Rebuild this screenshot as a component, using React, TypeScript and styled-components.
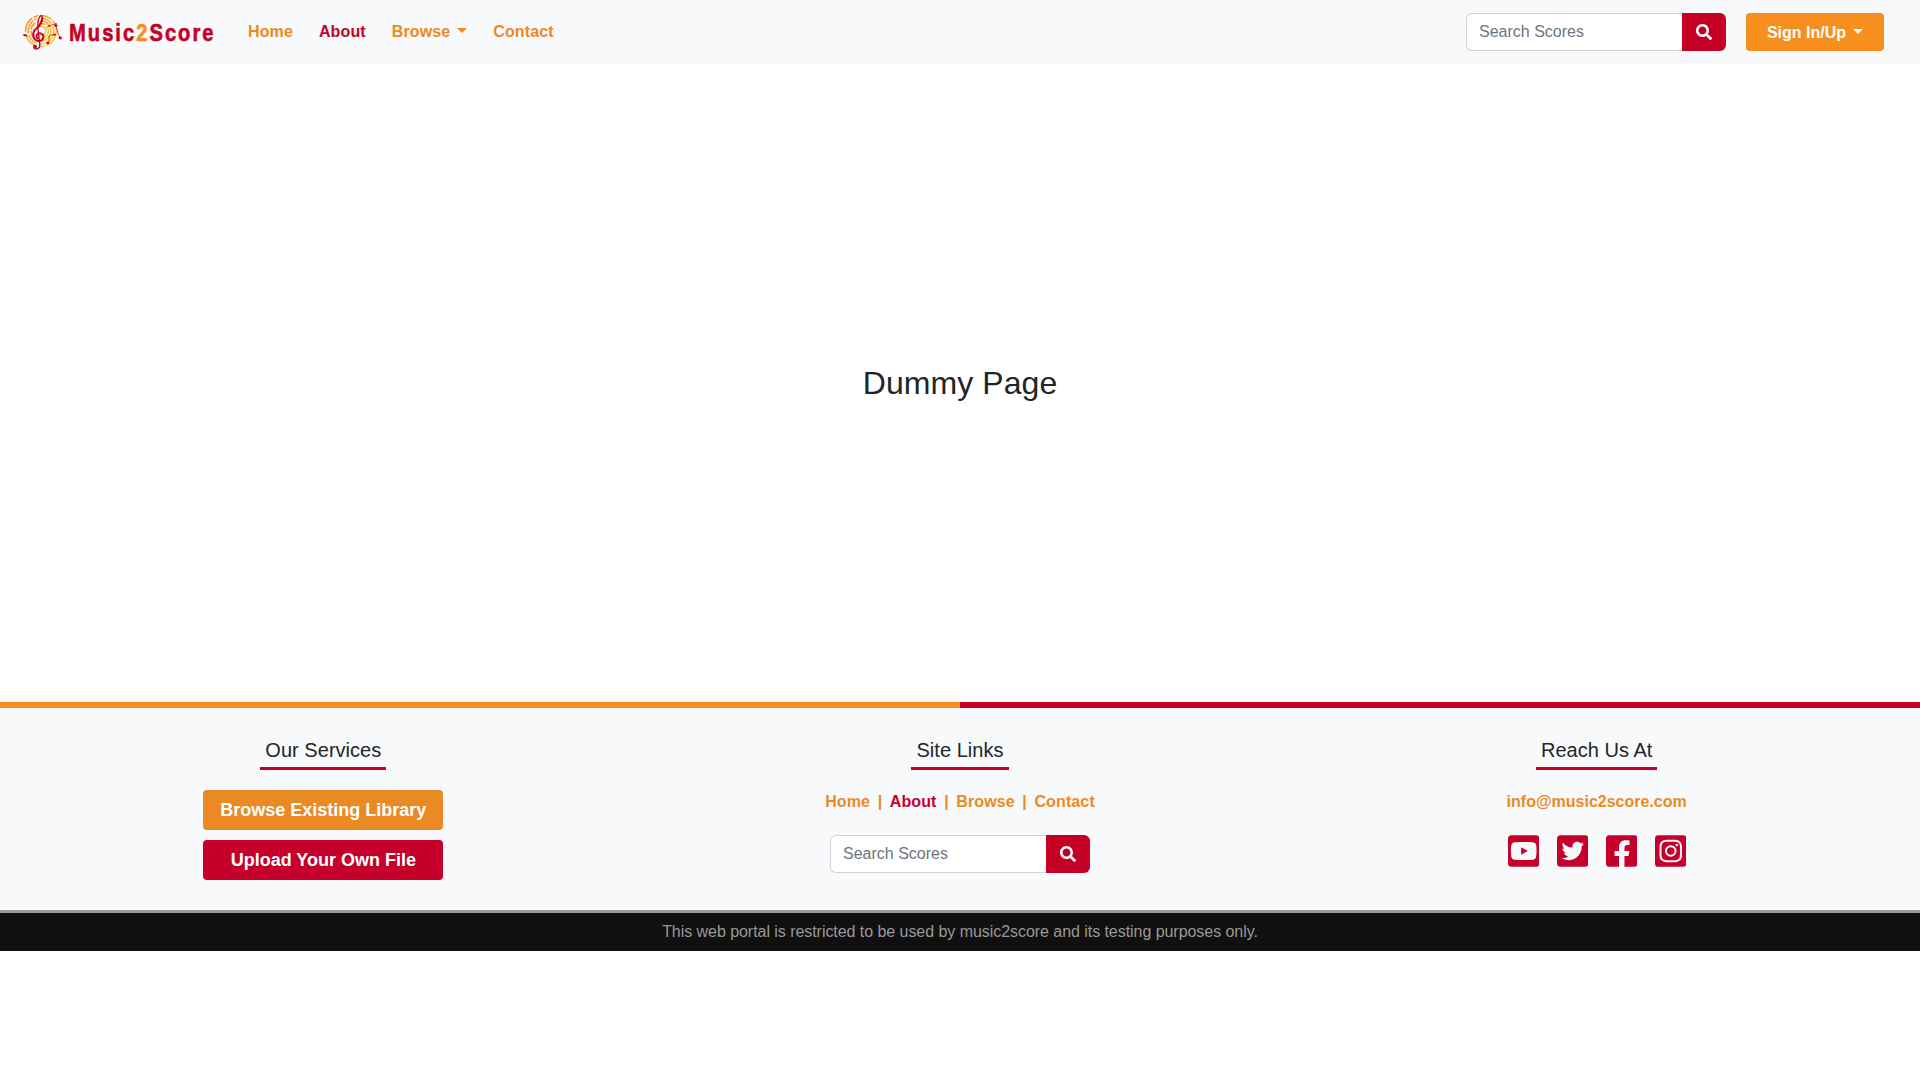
import React from "react";
import styled, { createGlobalStyle } from "styled-components";
import {
  FaSearch,
  FaYoutubeSquare,
  FaTwitterSquare,
  FaFacebookSquare,
  FaInstagramSquare,
} from "react-icons/fa";

const red = "#c4002b";
const searchRed = "#c50025";
const orange = "#eb8a25";
const brightOrange = "#f78f1e";

const GlobalStyle = createGlobalStyle`
  *, *::before, *::after { box-sizing: border-box; }
  body {
    margin: 0;
    background: #fff;
    color: #212529;
    font-family: "Liberation Sans", Arial, sans-serif;
    font-size: 16px;
    line-height: 24px;
  }
`;

const Navbar = styled.nav`
  display: flex;
  align-items: center;
  height: 64px;
  padding: 0 36px 0 22px;
  background: #f8f9fb;
`;

const Logo = styled.svg`
  display: block;
  flex: none;
  width: 196px;
  height: 64px;
`;

const NavLinks = styled.div`
  display: flex;
  gap: 26px;
  margin-left: 30px;
  flex: 1;
`;

const Link = styled.a<{ $active?: boolean }>`
  color: ${(p) => (p.$active ? red : orange)};
  font-weight: 700;
  letter-spacing: 0.12px;
  text-decoration: none;
  white-space: nowrap;
`;

const Email = styled(Link)`
  letter-spacing: 0;
`;

const Caret = styled.span`
  display: inline-block;
  margin-left: 7px;
  vertical-align: 4px;
  border-top: 5px solid;
  border-left: 5px solid transparent;
  border-right: 5px solid transparent;
`;

const SearchForm = styled.form`
  display: flex;
  width: 260px;
  height: 38px;
`;

const SearchInput = styled.input`
  flex: 1;
  min-width: 0;
  padding: 6px 12px;
  border: 1px solid #ced4da;
  border-right: 0;
  border-radius: 6px 0 0 6px;
  background: #fff;
  font: inherit;
  &::placeholder { color: #6c757d; opacity: 1; }
`;

const SearchButton = styled.button`
  display: flex;
  align-items: center;
  justify-content: center;
  width: 44px;
  padding: 0;
  border: 0;
  border-radius: 0 6px 6px 0;
  background: ${searchRed};
  color: #fff;
  font-size: 16px;
`;

const SignButton = styled.button`
  width: 138px;
  height: 38px;
  margin-left: 20px;
  padding: 2px 0 0;
  border: 0;
  border-radius: 4px;
  background: ${brightOrange};
  color: #fff;
  font: inherit;
  font-weight: 700;
`;

const Main = styled.main`
  display: flex;
  align-items: center;
  justify-content: center;
  height: 638px;
`;

const Title = styled.h1`
  margin: 0;
  font-size: 32px;
  line-height: 38px;
  font-weight: 400;
  letter-spacing: 0.07px;
`;

const Stripe = styled.div`
  height: 6px;
  background: linear-gradient(to right, ${brightOrange} 50%, ${searchRed} 50%);
`;

const Footer = styled.footer`
  display: grid;
  grid-template-columns: repeat(3, 1fr);
  height: 202px;
  padding: 27px 5px 0;
  background: #f8f9fb;
`;

const Column = styled.section`
  display: flex;
  flex-direction: column;
  align-items: center;
`;

const ColumnTitle = styled.h2`
  height: 35px;
  margin: 0 0 20px;
  padding: 3px 5px 0;
  border-bottom: 3px solid ${red};
  font-size: 20px;
  line-height: 24px;
  font-weight: 400;
  letter-spacing: 0.03px;
`;

const ActionButton = styled.button<{ $color: string }>`
  width: 240px;
  height: 40px;
  margin-bottom: 10px;
  padding: 0;
  border: 0;
  border-radius: 4px;
  background: ${(p) => p.$color};
  color: #fff;
  font: inherit;
  font-size: 18px;
  font-weight: 700;
`;

const LinkRow = styled.div`
  display: flex;
  gap: 7.6px;
  margin-bottom: 21px;
  color: ${orange};
  font-weight: 700;
`;

const SocialRow = styled.div`
  display: flex;
  gap: 17.5px;
  padding-left: 1px;
  color: ${red};
  font-size: 36px;
  svg { display: block; width: 31.5px; height: 36px; margin-top: -2px; }
`;

const Notice = styled.div`
  height: 41px;
  padding-top: 7px;
  border-top: 3px solid #999b98;
  background: #101010;
  color: #999;
  letter-spacing: -0.05px;
  text-align: center;
`;

const LogoMark = () => (
  <Logo viewBox="22 0 196 64" role="img" aria-label="Music2Score">
    <defs>
      <linearGradient id="rings" x1="0" y1="0" x2="1" y2="1">
        <stop offset="0" stopColor="#f58a1f" />
        <stop offset="1" stopColor="#ffd93b" />
      </linearGradient>
    </defs>
    <g fill="none" stroke="url(#rings)" strokeWidth="1.6">
      <circle cx="41" cy="31" r="15.5" strokeDasharray="19 1.5 25 2 16 1.5" />
      <circle cx="41" cy="31" r="12.8" strokeDasharray="14 1.5 20 2" />
      <circle cx="41" cy="31" r="10.1" strokeDasharray="15 1.5" />
      <circle cx="41" cy="31" r="7.4" strokeDasharray="12 1.5" />
      <circle cx="41" cy="31" r="4.7" />
    </g>
    <path d="M35 49L39 45L38 38L36 31Q37 18 41 16" fill="none" stroke="#f8f9fb" strokeWidth="4" />
    <g fill="none" stroke={red} strokeLinecap="round">
      <path d="M39.8 45.5C39.8 40 37.5 31 37.8 24C38.2 18 40.2 14.8 41.8 16C43.4 19 42 23 38.5 27" strokeWidth="1.3" />
      <path d="M42.3 18C42.3 23 38.5 26.5 35 30C31.6 34 33 40 38 41C44 41.5 45.3 34.5 40.5 33.3C36.7 32.6 35.4 37 37.8 38.4" strokeWidth="1.9" />
      <path d="M39.8 45C39.8 48.8 36.5 50 34.5 48.2" strokeWidth="1.4" />
      <path d="M48.5 26L56.5 23.5M55.5 24L58.5 35L60.5 38M49 42V36L55 34M23 34.5L28 36" strokeWidth="0.7" />
    </g>
    <g fill={red}>
      <circle cx="35" cy="46.7" r="2" />
      <ellipse cx="55.8" cy="25.5" rx="1.7" ry="1.2" />
      <ellipse cx="49.2" cy="26" rx="1.2" ry="0.8" />
      <ellipse cx="60.2" cy="38" rx="1.7" ry="1.4" />
      <ellipse cx="54.6" cy="34.8" rx="1.3" ry="1" />
      <ellipse cx="47.8" cy="43" rx="1.6" ry="1.3" />
      <ellipse cx="25" cy="35.2" rx="1.6" ry="1" />
    </g>
    <text
      transform="translate(69 41) scale(0.84 1)"
      fill={searchRed}
      stroke={searchRed}
      strokeWidth="0.6"
      fontFamily="Liberation Sans, Arial, sans-serif"
      fontSize="24"
      fontWeight="700"
      letterSpacing="2.4"
    >
      Music<tspan fill={brightOrange} stroke={brightOrange}>2</tspan>Score
    </text>
  </Logo>
);

const Search = () => (
  <SearchForm>
    <SearchInput placeholder="Search Scores" />
    <SearchButton type="button" aria-label="Search">
      <FaSearch />
    </SearchButton>
  </SearchForm>
);

export default function App() {
  return (
    <>
      <GlobalStyle />
      <Navbar>
        <LogoMark />
        <NavLinks>
          <Link>Home</Link>
          <Link $active>About</Link>
          <Link>
            Browse
            <Caret />
          </Link>
          <Link>Contact</Link>
        </NavLinks>
        <Search />
        <SignButton>
          Sign In/Up
          <Caret />
        </SignButton>
      </Navbar>
      <Main>
        <Title>Dummy Page</Title>
      </Main>
      <Stripe />
      <Footer>
        <Column>
          <ColumnTitle>Our Services</ColumnTitle>
          <ActionButton $color={orange}>Browse Existing Library</ActionButton>
          <ActionButton $color={red}>Upload Your Own File</ActionButton>
        </Column>
        <Column>
          <ColumnTitle>Site Links</ColumnTitle>
          <LinkRow>
            <Link>Home</Link>
            <span>|</span>
            <Link $active>About</Link>
            <span>|</span>
            <Link>Browse</Link>
            <span>|</span>
            <Link>Contact</Link>
          </LinkRow>
          <Search />
        </Column>
        <Column>
          <ColumnTitle>Reach Us At</ColumnTitle>
          <LinkRow>
            <Email>info@music2score.com</Email>
          </LinkRow>
          <SocialRow>
            <FaYoutubeSquare />
            <FaTwitterSquare />
            <FaFacebookSquare />
            <FaInstagramSquare />
          </SocialRow>
        </Column>
      </Footer>
      <Notice>
        This web portal is restricted to be used by music2score and its testing purposes only.
      </Notice>
    </>
  );
}
